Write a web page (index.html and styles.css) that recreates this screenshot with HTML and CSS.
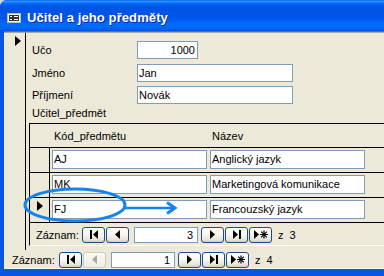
FILE: index.html
```html
<!DOCTYPE html>
<html lang="cs">
<head>
<meta charset="UTF-8" />
<title>Učitel a jeho předměty</title>
<link rel="stylesheet" href="styles.css">
</head>
<body>
  <div class="window">
    <div class="titlebar">
      <svg class="form-icon" width="14" height="10" viewBox="0 0 14 10">
        <rect x="0.5" y="0.5" width="13" height="9" fill="#fff" stroke="#b8b8b8"/>
        <rect x="2.5" y="2.5" width="3" height="2" fill="none" stroke="#333"/>
        <rect x="6.5" y="2.5" width="5" height="2" fill="none" stroke="#333"/>
        <rect x="2.5" y="5.5" width="3" height="2" fill="none" stroke="#333"/>
        <rect x="6.5" y="5.5" width="5" height="2" fill="none" stroke="#333"/>
      </svg>
      <span class="title">Učitel a jeho předměty</span>
    </div>

    <div class="frame">
      <div class="client">
        <div class="form">
          <div class="selector">
            <svg width="6" height="10" viewBox="0 0 6 10"><path d="M0 0V10L6 5Z"/></svg>
          </div>
          <div class="detail">
            <div class="field">
              <label>Učo</label>
              <div class="box short num">1000</div>
            </div>
            <div class="field">
              <label>Jméno</label>
              <div class="box long">Jan</div>
            </div>
            <div class="field">
              <label>Příjmení</label>
              <div class="box long">Novák</div>
            </div>

            <div class="sub-label">Učitel_předmět</div>
            <div class="subform">
              <div class="sub-head">
                <span class="col-code">Kód_předmětu</span>
                <span>Název</span>
              </div>
              <div class="srow">
                <div class="sel"></div>
                <div class="box code">AJ</div>
                <div class="box name">Anglický jazyk</div>
              </div>
              <div class="srow">
                <div class="sel"></div>
                <div class="box code">MK</div>
                <div class="box name">Marketingová komunikace</div>
              </div>
              <div class="srow">
                <div class="sel">
                  <svg width="6" height="10" viewBox="0 0 6 10"><path d="M0 0V10L6 5Z"/></svg>
                </div>
                <div class="box code">FJ</div>
                <div class="box name">Francouzský jazyk</div>
              </div>

              <div class="nav sub-nav">
                <span class="nav-label">Záznam:</span>
                <div class="navbtn"><svg width="8" height="9" viewBox="0 0 8 9"><rect width="2" height="9"/><path d="M8 0V9L3 4.5Z"/></svg></div>
                <div class="navbtn"><svg width="5" height="9" viewBox="0 0 5 9"><path d="M5 0V9L0 4.5Z"/></svg></div>
                <div class="navnum">3</div>
                <div class="navbtn"><svg width="5" height="9" viewBox="0 0 5 9"><path d="M0 0V9L5 4.5Z"/></svg></div>
                <div class="navbtn"><svg width="8" height="9" viewBox="0 0 8 9"><path d="M0 0V9L5 4.5Z"/><rect x="6" width="2" height="9"/></svg></div>
                <div class="navbtn"><svg width="14" height="9" viewBox="0 0 14 9"><path d="M0 0V9L5 4.5Z"/><g stroke="#000" stroke-width="1.2"><line x1="10" y1="0.5" x2="10" y2="8.5"/><line x1="6" y1="4.5" x2="14" y2="4.5"/><line x1="7.2" y1="1.7" x2="12.8" y2="7.3"/><line x1="12.8" y1="1.7" x2="7.2" y2="7.3"/></g></svg></div>
                <span class="nav-count">z 3</span>
              </div>
            </div>
          </div>
        </div>

        <div class="nav main-nav">
          <span class="nav-label">Záznam:</span>
          <div class="navbtn"><svg width="8" height="9" viewBox="0 0 8 9"><rect width="2" height="9"/><path d="M8 0V9L3 4.5Z"/></svg></div>
          <div class="navbtn off"><svg width="5" height="9" viewBox="0 0 5 9"><path d="M5 0V9L0 4.5Z"/></svg></div>
          <div class="navnum">1</div>
          <div class="navbtn"><svg width="5" height="9" viewBox="0 0 5 9"><path d="M0 0V9L5 4.5Z"/></svg></div>
          <div class="navbtn"><svg width="8" height="9" viewBox="0 0 8 9"><path d="M0 0V9L5 4.5Z"/><rect x="6" width="2" height="9"/></svg></div>
          <div class="navbtn"><svg width="14" height="9" viewBox="0 0 14 9"><path d="M0 0V9L5 4.5Z"/><g stroke="#000" stroke-width="1.2"><line x1="10" y1="0.5" x2="10" y2="8.5"/><line x1="6" y1="4.5" x2="14" y2="4.5"/><line x1="7.2" y1="1.7" x2="12.8" y2="7.3"/><line x1="12.8" y1="1.7" x2="7.2" y2="7.3"/></g></svg></div>
          <span class="nav-count">z 4</span>
        </div>
      </div>
    </div>
  </div>

  <!-- annotation drawn over the current subform record -->
  <svg class="markup" width="384" height="276" viewBox="0 0 384 276">
    <ellipse cx="75" cy="205" rx="50" ry="16" fill="none" stroke="#1583ee" stroke-width="3"/>
    <line x1="125" y1="208" x2="174" y2="208" stroke="#1583ee" stroke-width="2.5"/>
    <path d="M167 202.5L175 208L167 213.5" fill="none" stroke="#1583ee" stroke-width="3"/>
  </svg>
</body>
</html>
```

FILE: styles.css
```css
* {
  box-sizing: border-box;
}

html, body {
  margin: 0;
}

body {
  position: relative;
  width: 384px;
  height: 276px;
  overflow: hidden;
  background: #d6d6d6;
  font-family: "Liberation Sans", Arial, sans-serif;
  font-size: 11px;
  color: #000;
}

.window {
  display: flex;
  flex-direction: column;
  height: 276px;
  border-top-left-radius: 7px;
  overflow: hidden;
  background: #0b55e4;
}

.titlebar {
  flex: none;
  display: flex;
  align-items: center;
  height: 31px;
  padding: 5px 0 0 7px;
  background: linear-gradient(to bottom, #0058ee 0%, #3593ff 4%, #288eff 6%, #127dff 8%,
    #036ffc 10%, #0262ee 14%, #0057e5 20%, #0054e3 24%, #0055eb 56%, #005bf5 66%,
    #026afe 76%, #0068ff 88%, #0060f0 94%, #0050d8 100%);
}

.form-icon {
  flex: none;
  margin-right: 6px;
}

.title {
  font-weight: bold;
  font-size: 13px;
  line-height: 16px;
  letter-spacing: 0.1px;
  color: #fff;
  text-shadow: 1px 1px 0 #0a2a9a;
  white-space: nowrap;
}

.frame {
  flex: 1;
  padding: 0 0 7px 4px;
}

.client {
  display: flex;
  flex-direction: column;
  height: 238px;
  background: #ece9d8;
  border-top: 1px solid #716f64;
  box-shadow: inset 0 1px 0 #aca899;
}

.form {
  display: flex;
  height: 218px;
  padding-top: 1px;
}

.selector {
  flex: none;
  width: 22px;
  padding: 3px 0 0 11px;
  border-right: 1px solid #000;
}

.selector svg, .sel svg {
  display: block;
}

.detail {
  flex: 1;
  display: flex;
  flex-direction: column;
  padding: 8px 0 0 6px;
}

.field {
  display: flex;
  align-items: center;
  height: 18px;
  margin-bottom: 4px;
}

.field:first-child {
  margin-bottom: 5px;
}

.field label {
  width: 105px;
}

.box {
  height: 18px;
  padding: 0 1px;
  line-height: 16px;
  border: 1px solid #7f9db9;
  background: #fff;
  white-space: nowrap;
  overflow: hidden;
}

.box.short {
  width: 61px;
}

.box.long {
  width: 156px;
}

.box.num {
  text-align: right;
  padding-right: 2px;
}

.sub-label {
  margin-top: -1px;
  line-height: 13px;
  height: 16px;
}

.subform {
  margin-left: -3px;
  border-top: 1px solid #000;
  border-left: 1px solid #000;
  border-bottom: 1px solid #fff;
}

.sub-head {
  display: flex;
  align-items: center;
  height: 24px;
  border-bottom: 1px solid #000;
}

.col-code {
  width: 182px;
  padding-left: 24px;
}

.srow {
  display: flex;
  height: 25px;
  border-bottom: 1px solid #000;
}

.sel {
  flex: none;
  width: 20px;
  padding: 3px 0 0 7px;
  border-right: 1px solid #000;
}

.srow .box {
  height: 19px;
  margin-top: 2px;
  line-height: 17px;
  width: 155px;
}

.box.code {
  margin-left: 2px;
}

.box.name {
  margin-left: 3px;
}

.nav {
  display: flex;
  align-items: center;
  white-space: nowrap;
}

.sub-nav {
  height: 22px;
  padding: 1px 0 0 6px;
}

.main-nav {
  flex: 1;
  padding: 1px 0 0 8px;
  border-bottom: 1px solid #f6f5ee;
}

.sub-nav .nav-label {
  width: 46px;
}

.main-nav .nav-label {
  width: 47px;
}

.navbtn {
  flex: none;
  display: flex;
  align-items: center;
  justify-content: center;
  width: 23px;
  height: 16px;
  margin-right: 1px;
  border: 1px solid #1c4d86;
  border-radius: 3px;
  background: linear-gradient(to bottom, #fff 0%, #f6f5f0 50%, #e6e3d6 85%, #d2cdb8 100%);
}

.navbtn.off {
  border-color: #cdcab9;
  background: linear-gradient(to bottom, #fbfaf6, #efede3);
}

.navbtn.off svg {
  fill: #aca899;
}

.navnum {
  flex: none;
  width: 64px;
  height: 16px;
  margin: 0 3px 0 4px;
  padding-right: 4px;
  line-height: 14px;
  text-align: right;
  border: 1px solid #7f9db9;
  background: #fff;
}

.nav-count {
  margin-left: 5px;
  word-spacing: 3px;
}

.markup {
  position: absolute;
  left: 0;
  top: 0;
  pointer-events: none;
}
```
